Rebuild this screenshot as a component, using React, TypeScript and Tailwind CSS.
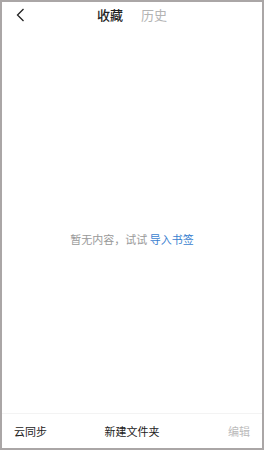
import React from 'react';

export default function App() {
  return (
    <div
      className="w-[264px] h-[450px] border-2 border-[#aaa6a6] bg-white flex flex-col text-[#222]"
      style={{ fontFamily: '"Noto Sans CJK SC", "Noto Sans", sans-serif' }}
    >
      {/* Header */}
      <div className="relative h-[30px] flex items-center justify-center shrink-0">
        <button className="absolute left-[11px] top-[5px] w-[14px] h-[16px] flex items-center justify-center">
          <svg width="9" height="14" viewBox="0 0 9 14" fill="none">
            <path d="M7.5 1L1.5 7L7.5 13" stroke="#222" strokeWidth="1.3" />
          </svg>
        </button>
        <div className="flex items-center gap-[18px] -mt-[6px]">
          <span className="text-[13px] leading-none font-medium text-[#222]">收藏</span>
          <span className="text-[13px] leading-none text-[#b3b3b3]">历史</span>
        </div>
      </div>

      {/* Empty state */}
      <div className="flex-1 flex items-center justify-center pb-[2px]">
        <p className="text-[11px] leading-none mt-[36px]">
          <span className="text-[#999]">暂无内容，试试 </span>
          <span className="text-[#3a7fd0]">导入书签</span>
        </p>
      </div>

      {/* Footer */}
      <div className="h-[35px] shrink-0 border-t border-[#f3f3f3] grid grid-cols-3 items-center pl-[12px] pr-[12px]">
        <span className="text-[11px] leading-none text-[#222] justify-self-start">云同步</span>
        <span className="text-[11px] leading-none text-[#222] justify-self-center">新建文件夹</span>
        <span className="text-[11px] leading-none text-[#bbb] justify-self-end">编辑</span>
      </div>
    </div>
  );
}
